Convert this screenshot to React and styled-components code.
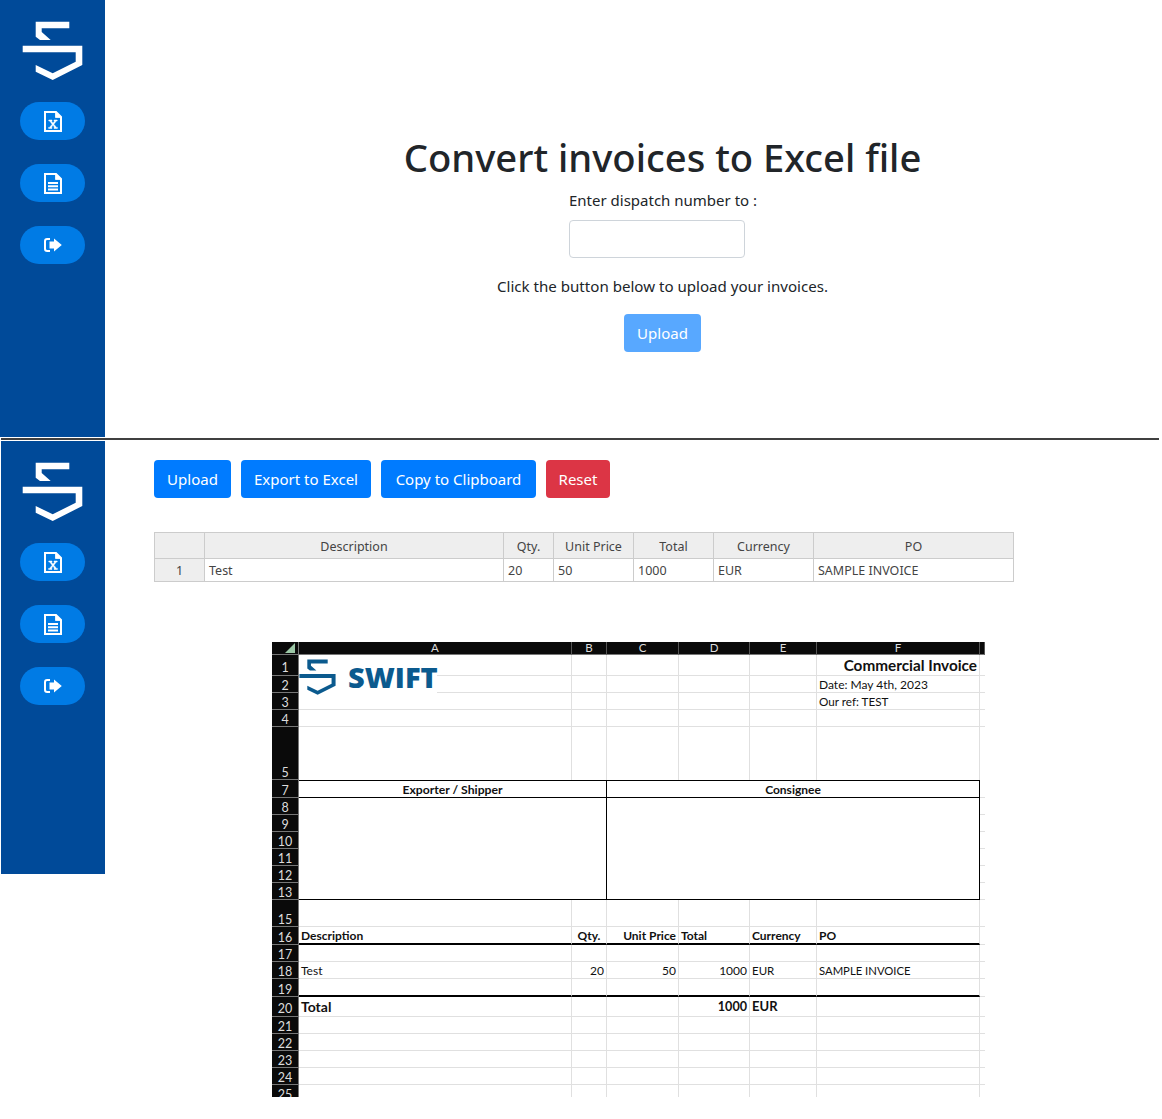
import React from 'react'
import styled, { createGlobalStyle } from 'styled-components'

const GlobalStyle = createGlobalStyle`
  html, body {
    margin: 0;
    padding: 0;
    background: #fff;
    color: #212529;
    font-family: "Noto Sans", "Open Sans", sans-serif;
  }
`

const COLUMNS = ['A', 'B', 'C', 'D', 'E', 'F', '']

const cell = (text, props = {}) => ({ text, ...props })

const SHEET_ROWS = [
  { n: '1', h: 21, lift: 1, cells: [{}, {}, {}, {}, {}, cell('Commercial Invoice', { bold: true, size: 15.3, align: 'flex-end', pad: 2, lift: 2 }), {}] },
  { n: '2', h: 17, cells: [{}, {}, {}, {}, {}, cell('Date: May 4th, 2023'), {}] },
  { n: '3', h: 17, cells: [{}, {}, {}, {}, {}, cell('Our ref: TEST', { size: 11.7 }), {}] },
  { n: '4', h: 17 },
  { n: '5', h: 53, open: true },
  {
    n: '7',
    h: 18,
    cells: [
      cell('Exporter / Shipper', { span: 2, bold: true, box: 'head', align: 'center', size: 12.2 }),
      cell('Consignee', { span: 4, bold: true, box: 'head', align: 'center' }),
      {},
    ],
  },
  {
    n: '8',
    h: 17,
    cells: [{ span: 2, rows: 6, box: 'body' }, { span: 4, rows: 6, box: 'body' }, {}],
  },
  { n: '9', h: 17, cells: [{}] },
  { n: '10', h: 17, cells: [{}] },
  { n: '11', h: 17, cells: [{}] },
  { n: '12', h: 17, cells: [{}] },
  { n: '13', h: 17, cells: [{}] },
  { n: '15', h: 27 },
  {
    n: '16',
    h: 18,
    cells: [
      cell('Description', { bold: true, rule: true }),
      cell('Qty.', { bold: true, rule: true, align: 'center' }),
      cell('Unit Price', { bold: true, rule: true, align: 'flex-end' }),
      cell('Total', { bold: true, rule: true }),
      cell('Currency', { bold: true, rule: true }),
      cell('PO', { bold: true, rule: true }),
      {},
    ],
  },
  { n: '17', h: 17 },
  {
    n: '18',
    h: 17,
    cells: [
      cell('Test'),
      cell('20', { align: 'flex-end' }),
      cell('50', { align: 'flex-end' }),
      cell('1000', { align: 'flex-end' }),
      cell('EUR', { size: 11.5 }),
      cell('SAMPLE INVOICE', { size: 11.3 }),
      {},
    ],
  },
  {
    n: '19',
    h: 18,
    cells: [{ rule: true }, { rule: true }, { rule: true }, { rule: true }, { rule: true }, { rule: true }, {}],
  },
  {
    n: '20',
    h: 20,
    lift: 1,
    cells: [
      cell('Total', { bold: true, size: 14, lift: 2 }),
      {},
      {},
      cell('1000', { bold: true, size: 12.6, align: 'flex-end', lift: 2 }),
      cell('EUR', { bold: true, size: 13, lift: 2 }),
      {},
      {},
    ],
  },
  { n: '21', h: 17 },
  { n: '22', h: 17 },
  { n: '23', h: 17 },
  { n: '24', h: 17 },
  { n: '25', h: 17 },
]

const Page = styled.div`
  width: 1162px;
`

const Screen = styled.section`
  display: flex;
  align-items: flex-start;
  height: ${(p) => p.$height}px;
`

const Sidebar = styled.nav`
  box-sizing: border-box;
  flex: none;
  width: 105px;
  height: ${(p) => p.$height}px;
  padding: 22px 0 0 ${(p) => (p.$inset ? '19px' : '20px')};
  background: #004a99;
  background-clip: padding-box;
  border-left: ${(p) => (p.$inset ? '1px solid #fff' : 'none')};
`

const LogoMark = styled.svg`
  display: block;
  width: ${(p) => p.$size}px;
  height: ${(p) => p.$size}px;
  flex: none;
  fill: currentColor;
`

const SidebarLogo = styled.div`
  color: #fff;
  height: 59px;
  margin: -1px 0 22px 2px;
`

const Pill = styled.button`
  display: flex;
  align-items: center;
  justify-content: center;
  width: 65px;
  height: 38px;
  margin-bottom: 24px;
  padding: 0;
  border: none;
  border-radius: 19px;
  background: #007be5;
  color: #fff;
`

const PillIcon = styled.svg`
  display: block;
  width: 18px;
  height: ${(p) => p.$h}px;
  fill: #fff;
  stroke: #fff;
`

const Divider = styled.div`
  height: 2px;
  width: 1158px;
  margin: 1px 0 1px 1px;
  background: #404040;
`

const Uploader = styled.div`
  flex: 1;
  display: flex;
  flex-direction: column;
  align-items: center;
  padding: 133px 0 0 58px;
`

const Title = styled.h1`
  margin: 0 0 7px;
  font-size: 38.2px;
  font-weight: 500;
  line-height: 48px;
  color: #212529;
`

const DispatchField = styled.label`
  display: flex;
  flex-direction: column;
  align-items: flex-start;
  gap: 8px;
  width: 187px;
  margin-bottom: 16px;
  font-size: 15px;
  line-height: 24px;
  white-space: nowrap;
`

const DispatchInput = styled.input`
  box-sizing: border-box;
  width: 176px;
  height: 38px;
  border: 1px solid #ced4da;
  border-radius: 4px;
  background: #fff;
`

const Hint = styled.p`
  margin: 0 0 16px;
  font-size: 15.1px;
  line-height: 24px;
`

const Button = styled.button`
  box-sizing: border-box;
  height: 38px;
  width: ${(p) => p.$width}px;
  padding: 0;
  border: none;
  border-radius: 4px;
  background: ${(p) => p.$bg || '#007bff'};
  color: #fff;
  font-family: inherit;
  font-size: 15px;
  line-height: 24px;
  white-space: nowrap;
  opacity: ${(p) => (p.disabled ? 0.65 : 1)};
`

const Workspace = styled.div`
  flex: 1;
  padding: 19px 0 0 49px;
`

const Toolbar = styled.div`
  display: flex;
  gap: 10px;
  margin-bottom: 34px;
`

const ItemsTable = styled.table`
  width: 860px;
  table-layout: fixed;
  border-collapse: collapse;
  font-size: 12.5px;
  color: #444;
  margin-bottom: 60px;
`

const HeadCell = styled.th`
  box-sizing: border-box;
  height: 26px;
  padding: 2px 4px 0;
  border: 1px solid #ccc;
  background: #eee;
  font-weight: 400;
  text-align: center;
`

const BodyCell = styled.td`
  box-sizing: border-box;
  height: 23px;
  padding: 0 4px;
  border: 1px solid #ccc;
  background: ${(p) => (p.$index ? '#eee' : '#fff')};
  text-align: ${(p) => (p.$index ? 'center' : 'left')};
`

const Sheet = styled.div`
  position: relative;
  display: grid;
  grid-template-columns: 27px 273px 35px 72px 71px 67px 163px 5px;
  grid-template-rows: ${(p) => p.$rows};
  width: 713px;
  height: 455px;
  margin-left: 118px;
  overflow: hidden;
  background: #fff;
  font-family: Lato, "Open Sans", sans-serif;
  font-size: 12px;
  color: #111;
`

const Corner = styled.div`
  display: flex;
  justify-content: flex-end;
  padding: 1px 3px 0 0;
  background: #0a0a0a;
  border-bottom: 1px solid #777;
  border-right: 1px solid #777;
`

const ColumnHead = styled.div`
  box-sizing: border-box;
  display: flex;
  align-items: center;
  justify-content: center;
  background: #0a0a0a;
  border-bottom: 1px solid #777;
  border-right: 1px solid #555;
  color: #ddd;
  font-size: 11.5px;
  line-height: 12px;
`

const RowHead = styled.div`
  box-sizing: border-box;
  display: flex;
  align-items: flex-end;
  justify-content: center;
  padding-bottom: ${(p) => p.$lift}px;
  background: #0a0a0a;
  border-bottom: 1px solid #777;
  border-right: 1px solid #777;
  color: #ddd;
  font-size: 12.5px;
  line-height: 13px;
`

const Cell = styled.div`
  box-sizing: border-box;
  display: flex;
  align-items: flex-end;
  justify-content: ${(p) => p.$align};
  grid-column: span ${(p) => p.$span};
  grid-row: span ${(p) => p.$rows};
  padding: 0 ${(p) => p.$pad}px ${(p) => p.$lift}px 2px;
  border-right: 1px solid ${(p) => (p.$box ? '#000' : '#e0e0e0')};
  border-bottom: ${(p) => (p.$rule ? '2px solid #000' : p.$box ? '1px solid #000' : p.$open ? 'none' : '1px solid #e0e0e0')};
  border-top: ${(p) => (p.$box === 'head' ? '1px solid #000' : 'none')};
  font-weight: ${(p) => (p.$bold ? 700 : 400)};
  font-size: ${(p) => p.$size}px;
  line-height: 15px;
  white-space: nowrap;
`

const TailCell = styled(Cell)`
  border-right: none;
`

const SheetBrand = styled.div`
  position: absolute;
  left: 27px;
  top: 13px;
  display: flex;
  align-items: flex-start;
  gap: 12px;
  width: 138px;
  height: 38px;
  padding-top: 4px;
  box-sizing: border-box;
  background: #fff;
  color: #0b5a8e;
`

const BrandName = styled.span`
  margin-top: 2px;
  font-family: "Open Sans", sans-serif;
  font-size: 29px;
  font-weight: 800;
  line-height: 32px;
`

const Logo = ({ size }) => (
  <LogoMark $size={size} viewBox="22 21 61 61">
    <path d="M35.7 21.7H69.3V28.3H41.7V32L50.7 40H40L35.7 36.7Z" />
    <path d="M22.7 45.7H82.3V65L52.7 80L35.7 71.7V65L52.7 73.3L75.7 61.7V52.3H22.7Z" />
  </LogoMark>
)

const ExcelIcon = () => (
  <PillIcon $h={21} viewBox="0 0 18 21">
    <path d="M1 1H12L17 6V20H1Z" fill="none" strokeWidth="2" />
    <path d="M11.5 1V6.5H17Z" strokeWidth="0.8" />
    <path d="M4.8 9H8V10H7.4L9 12.3L10.6 10H10V9H13.2V10H12.3L9.8 13.2L12.5 16.4H13.4V17.4H10V16.4H10.6L9 14.1L7.4 16.4H8V17.4H4.6V16.4H5.5L8.2 13.2L5.7 10H4.8Z" strokeWidth="0.5" />
  </PillIcon>
)

const TextIcon = () => (
  <PillIcon $h={21} viewBox="0 0 18 21">
    <path d="M1 1H12L17 6V20H1Z" fill="none" strokeWidth="2" />
    <path d="M11.5 1V6.5H17Z" strokeWidth="0.8" />
    <path d="M4 10H14M4 13.3H14M4 16.6H14" fill="none" strokeWidth="2" />
  </PillIcon>
)

const SignOutIcon = () => (
  <PillIcon $h={14} viewBox="0 0 18 14">
    <path d="M6 1H3.2Q1 1 1 3.2V10.8Q1 13 3.2 13H6" fill="none" strokeWidth="2" />
    <path d="M5.5 3.6H10V0.4L17.8 7L10 13.6V10.4H5.5Z" stroke="none" />
  </PillIcon>
)

const Nav = ({ height, inset }) => (
  <Sidebar $height={height} $inset={inset}>
    <SidebarLogo>
      <Logo size={61} />
    </SidebarLogo>
    <Pill>
      <ExcelIcon />
    </Pill>
    <Pill>
      <TextIcon />
    </Pill>
    <Pill>
      <SignOutIcon />
    </Pill>
  </Sidebar>
)

const ITEM_WIDTHS = [50, 299, 50, 80, 80, 100, 200]

const ItemsGrid = () => (
  <ItemsTable>
    <colgroup>
      {ITEM_WIDTHS.map((w, i) => (
        <col key={i} width={w} />
      ))}
    </colgroup>
    <thead>
      <tr>
        {['', 'Description', 'Qty.', 'Unit Price', 'Total', 'Currency', 'PO'].map((h, i) => (
          <HeadCell key={i}>{h}</HeadCell>
        ))}
      </tr>
    </thead>
    <tbody>
      <tr>
        <BodyCell $index>1</BodyCell>
        <BodyCell>Test</BodyCell>
        <BodyCell>20</BodyCell>
        <BodyCell>50</BodyCell>
        <BodyCell>1000</BodyCell>
        <BodyCell>EUR</BodyCell>
        <BodyCell>SAMPLE INVOICE</BodyCell>
      </tr>
    </tbody>
  </ItemsTable>
)

const SheetCell = ({ data, open, last }) => {
  const Comp = last ? TailCell : Cell
  return (
    <Comp
      $align={data.align || 'flex-start'}
      $span={data.span || 1}
      $rows={data.rows || 1}
      $pad={data.pad ?? 2}
      $lift={data.lift || 0}
      $box={data.box}
      $rule={data.rule}
      $open={open}
      $bold={data.bold}
      $size={data.size || 12}
    >
      {data.text}
    </Comp>
  )
}

const InvoiceSheet = () => (
  <Sheet $rows={`13px ${SHEET_ROWS.map((r) => r.h + 'px').join(' ')}`}>
    <Corner>
      <svg width="10" height="10" viewBox="0 0 10 10">
        <path d="M10 0V10H0Z" fill="#9cc8a6" />
      </svg>
    </Corner>
    {COLUMNS.map((c, i) => (
      <ColumnHead key={i}>{c}</ColumnHead>
    ))}
    {SHEET_ROWS.map((row) => {
      const cells = row.cells || [{}, {}, {}, {}, {}, {}, {}]
      return (
        <React.Fragment key={row.n}>
          <RowHead $lift={row.lift || 0}>{row.n}</RowHead>
          {cells.map((c, i) => (
            <SheetCell key={i} data={c} open={row.open} last={i === cells.length - 1} />
          ))}
        </React.Fragment>
      )
    })}
    <SheetBrand>
      <Logo size={37} />
      <BrandName>SWIFT</BrandName>
    </SheetBrand>
  </Sheet>
)

export default function App() {
  return (
    <Page>
      <GlobalStyle />
      <Screen $height={437}>
        <Nav height={437} />
        <Uploader>
          <Title>Convert invoices to Excel file</Title>
          <DispatchField>
            Enter dispatch number to :
            <DispatchInput type="text" />
          </DispatchField>
          <Hint>Click the button below to upload your invoices.</Hint>
          <Button disabled $width={77}>Upload</Button>
        </Uploader>
      </Screen>
      <Divider />
      <Screen $height={656}>
        <Nav height={433} inset />
        <Workspace>
          <Toolbar>
            <Button $width={77}>Upload</Button>
            <Button $width={130}>Export to Excel</Button>
            <Button $width={155}>Copy to Clipboard</Button>
            <Button $width={64} $bg="#dc3545">Reset</Button>
          </Toolbar>
          <ItemsGrid />
          <InvoiceSheet />
        </Workspace>
      </Screen>
    </Page>
  )
}
